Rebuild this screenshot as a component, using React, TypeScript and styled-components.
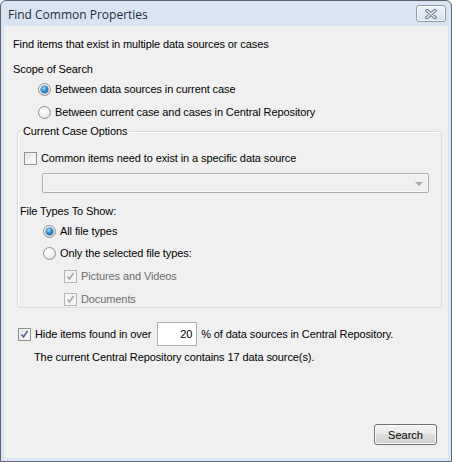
import React from "react";
import styled, { createGlobalStyle } from "styled-components";

const GlobalStyle = createGlobalStyle`
  html, body { margin: 0; padding: 0; background: #ffffff; }
  body { font-family: "Liberation Sans", Arial, sans-serif; font-size: 11px; letter-spacing: -0.1px; color: #000; }
  #root { width: 452px; height: 462px; }
`;

const Window = styled.div`
  box-sizing: border-box;
  width: 452px;
  height: 462px;
  border: 1px solid #5c6470;
  border-radius: 6px 6px 0 0;
  background: #dae5f3;
  padding: 0 3px 3px 3px;
  display: flex;
  flex-direction: column;
`;

const TitleBar = styled.div`
  height: 25px;
  display: flex;
  align-items: flex-start;
  justify-content: space-between;
  padding: 0 2px 0 4px;
`;

const Title = styled.div`
  font-family: "Open Sans", "Noto Sans", sans-serif;
  font-size: 12px;
  letter-spacing: 0;
  color: #1e2a3a;
  line-height: 14px;
  margin-top: 7px;
`;

const CloseButton = styled.div`
  box-sizing: border-box;
  width: 30px;
  height: 17px;
  margin-top: 4px;
  border: 1px solid #8c98a8;
  border-radius: 3px;
  background: linear-gradient(#eef3f9, #d8e2ee);
  display: flex;
  align-items: center;
  justify-content: center;
  box-shadow: inset 0 0 0 1px rgba(255, 255, 255, 0.7);
`;

const Body = styled.div`
  flex: 1;
  background: #f0f0f0;
  display: flex;
  flex-direction: column;
  padding: 9px 0 0 9px;
`;

const Line = styled.div<{ $indent?: number; $mt?: number; $disabled?: boolean }>`
  height: 18px;
  display: flex;
  align-items: center;
  margin-left: ${(p) => p.$indent ?? 0}px;
  margin-top: ${(p) => p.$mt ?? 0}px;
  color: ${(p) => (p.$disabled ? "#6d6d6d" : "#000")};
  white-space: nowrap;
`;

const RadioCircle = styled.span<{ $checked?: boolean }>`
  box-sizing: border-box;
  width: 13px;
  height: 13px;
  border-radius: 50%;
  border: 1px solid #8f8f8f;
  background: radial-gradient(circle at 40% 35%, #ffffff 0%, #f1f1f1 50%, #d4d4d4 100%);
  display: inline-flex;
  align-items: center;
  justify-content: center;
  margin-right: 4px;
  flex: none;
  &::after {
    content: "";
    display: ${(p) => (p.$checked ? "block" : "none")};
    width: 7px;
    height: 7px;
    border-radius: 50%;
    background: radial-gradient(circle at 40% 35%, #9fe0ff 0%, #2d8ad1 45%, #0e4e8c 100%);
    box-shadow: 0 0 0 0.5px #1f5a8f;
  }
`;

const CheckBox = styled.span<{ $disabled?: boolean }>`
  box-sizing: border-box;
  width: 13px;
  height: 13px;
  border: 1px solid ${(p) => (p.$disabled ? "#b4b4b4" : "#8f8f8f")};
  background: ${(p) =>
    p.$disabled ? "#f4f4f4" : "linear-gradient(135deg, #dcdcdc 0%, #f6f6f6 60%, #ffffff 100%)"};
  box-shadow: inset 0 0 0 1px ${(p) => (p.$disabled ? "#f4f4f4" : "#f2f2f2")};
  display: inline-flex;
  align-items: center;
  justify-content: center;
  margin-right: 4px;
  flex: none;
`;

const Check = ({ color }: { color: string }) => (
  <svg width="9" height="9" viewBox="0 0 9 9">
    <path d="M1.5 4.5 L3.5 7 L7.5 1" fill="none" stroke={color} strokeWidth="1.5" />
  </svg>
);

const Group = styled.fieldset`
  box-sizing: border-box;
  margin: 3px 0 0 4px;
  width: 425px;
  height: 184px;
  padding: 0 0 0 2px;
  border: 1px solid #d5dfe5;
  border-radius: 3px;
  box-shadow: inset 1px 1px 0 #ffffff;
  display: flex;
  flex-direction: column;
`;

const Legend = styled.legend`
  padding: 0 2px;
  margin-left: 1px;
  line-height: 14px;
  font-size: 11px;
`;

const Combo = styled.div`
  box-sizing: border-box;
  margin: 6px 0 0 22px;
  width: 387px;
  height: 20px;
  border: 1px solid #acacac;
  border-radius: 2px;
  background: #f0f0f0;
  box-shadow: inset 0 0 0 1px #fafafa;
  display: flex;
  align-items: center;
  justify-content: flex-end;
  padding-right: 5px;
`;

const Arrow = styled.span`
  width: 0;
  height: 0;
  border-left: 4px solid transparent;
  border-right: 4px solid transparent;
  border-top: 4px solid #a8a8a8;
  margin-top: 2px;
`;

const HideRow = styled.div`
  display: flex;
  align-items: center;
  height: 24px;
  margin: 14px 0 0 5px;
  white-space: nowrap;
`;

const NumberBox = styled.div`
  box-sizing: border-box;
  width: 40px;
  height: 24px;
  border: 1px solid #abadb3;
  background: #ffffff;
  margin: 0 4px 0 6px;
  display: flex;
  align-items: center;
  justify-content: flex-end;
  padding-right: 4px;
`;

const Footer = styled.div`
  margin-top: auto;
  display: flex;
  justify-content: flex-end;
  padding: 0 11px 13px 0;
`;

const Button = styled.button`
  box-sizing: border-box;
  width: 63px;
  height: 21px;
  border: 1px solid #707070;
  border-radius: 3px;
  background: linear-gradient(#f2f2f2 0%, #ebebeb 45%, #dddddd 50%, #cfcfcf 100%);
  box-shadow: inset 0 0 0 1px #fcfcfc;
  font-family: "Liberation Sans", Arial, sans-serif;
  font-size: 11px;
  color: #000;
  padding: 0;
`;

export default function App() {
  return (
    <>
      <GlobalStyle />
      <Window>
        <TitleBar>
          <Title>Find Common Properties</Title>
          <CloseButton>
            <svg width="14" height="10" viewBox="0 0 14 10">
              <path d="M3 1.5 L11 8.5 M11 1.5 L3 8.5" stroke="#5e6b7f" strokeWidth="3.4" strokeLinecap="round" />
              <path d="M3 1.5 L11 8.5 M11 1.5 L3 8.5" stroke="#f4f7fb" strokeWidth="1.6" strokeLinecap="round" />
            </svg>
          </CloseButton>
        </TitleBar>
        <Body>
          <Line>Find items that exist in multiple data sources or cases</Line>
          <Line $mt={7}>Scope of Search</Line>
          <Line $indent={25} $mt={2}>
            <RadioCircle $checked />
            Between data sources in current case
          </Line>
          <Line $indent={25} $mt={5}>
            <RadioCircle />
            Between current case and cases in Central Repository
          </Line>
          <Group>
            <Legend>Current Case Options</Legend>
            <Line $indent={4} $mt={11}>
              <CheckBox />
              Common items need to exist in a specific data source
            </Line>
            <Combo>
              <Arrow />
            </Combo>
            <Line $mt={9}>File Types To Show:</Line>
            <Line $indent={23} $mt={2}>
              <RadioCircle $checked />
              All file types
            </Line>
            <Line $indent={23} $mt={4}>
              <RadioCircle />
              Only the selected file types:
            </Line>
            <Line $indent={44} $mt={5} $disabled>
              <CheckBox $disabled>
                <Check color="#a3a3a3" />
              </CheckBox>
              Pictures and Videos
            </Line>
            <Line $indent={44} $mt={5} $disabled>
              <CheckBox $disabled>
                <Check color="#a3a3a3" />
              </CheckBox>
              Documents
            </Line>
          </Group>
          <HideRow>
            <CheckBox>
              <Check color="#4a5f97" />
            </CheckBox>
            Hide items found in over
            <NumberBox>20</NumberBox>
            % of data sources in Central Repository.
          </HideRow>
          <Line $indent={21} $mt={2}>
            The current Central Repository contains 17 data source(s).
          </Line>
          <Footer>
            <Button>Search</Button>
          </Footer>
        </Body>
      </Window>
    </>
  );
}
